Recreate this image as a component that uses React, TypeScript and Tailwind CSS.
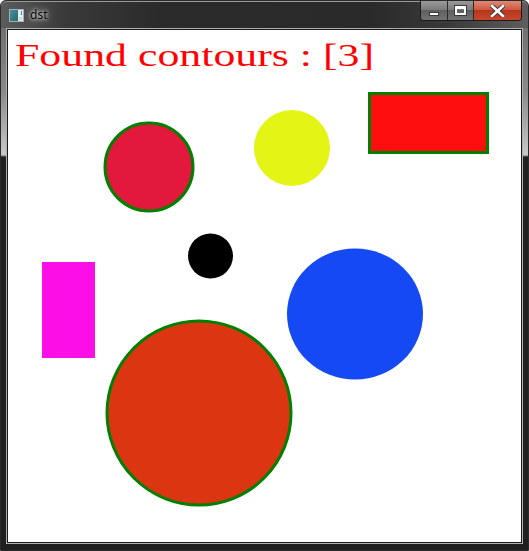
import React from "react";

function AppIcon() {
  return (
    <svg width="15" height="13" viewBox="0 0 15 13">
      <rect x="0.5" y="0.5" width="14" height="12" fill="#e8eef2" stroke="#9fb3bf" />
      <defs>
        <linearGradient id="ig" x1="0" y1="0" x2="1" y2="1">
          <stop offset="0" stopColor="#3f8fb0" />
          <stop offset="1" stopColor="#2e6a55" />
        </linearGradient>
      </defs>
      <rect x="1" y="1" width="8" height="11" fill="url(#ig)" />
      <rect x="10" y="8" width="3" height="3" fill="#cfd8dc" />
      <rect x="12" y="2" width="1" height="4" fill="#5a7f8f" />
    </svg>
  );
}

export default function App() {
  return (
    <div className="w-[529px] h-[551px] bg-white">
      <div className="w-[529px] h-[551px] flex flex-col rounded-t-[6px] border border-[#2a2a2a] bg-[linear-gradient(to_bottom,#4a4a4a_0px,#707070_28px,#8a8a8a_90px,#c8c8c8_154px,#1f1f1f_156px,#1f1f1f_100%)] overflow-hidden">
        {/* title bar */}
        <div className="relative h-[27px] flex items-center shrink-0 border-t border-[#9a9a9a] rounded-t-[6px] bg-[linear-gradient(to_right,#5c5c5c_0%,#3a3a3a_12%,#2b2b2b_30%,#2a2a2a_70%,#3a3a3a_85%,#5e5e5e_100%)]">
          <div className="ml-[8px] mt-[1px] flex items-center">
            <AppIcon />
          </div>
          <span
            className="ml-[6px] text-[12px] text-black leading-none"
            style={{ fontFamily: '"Noto Sans", "Liberation Sans", sans-serif', textShadow: "0 0 6px rgba(255,255,255,0.9), 0 0 3px rgba(255,255,255,0.9)" }}
          >
            dst
          </span>
          {/* caption buttons */}
          <div className="absolute right-[6px] top-[-1px] flex h-[20px] rounded-b-[4px] border border-t-0 border-[#1b1b1b] overflow-hidden">
            <div className="w-[27px] h-full flex items-center justify-center border-r border-[#2a2a2a] bg-[linear-gradient(to_bottom,#9a9a9a_0%,#7c7c7c_45%,#5f5f5f_50%,#727272_100%)]">
              <div className="mt-[6px] w-[10px] h-[4px] bg-white border border-[#3a3a3a]" />
            </div>
            <div className="w-[26px] h-full flex items-center justify-center border-r border-[#2a2a2a] bg-[linear-gradient(to_bottom,#9a9a9a_0%,#7c7c7c_45%,#5f5f5f_50%,#727272_100%)]">
              <div className="w-[11px] h-[9px] border-[2px] border-t-[3px] border-white outline outline-1 outline-[#3a3a3a]" />
            </div>
            <div className="w-[47px] h-full flex items-center justify-center bg-[linear-gradient(to_bottom,#e08a78_0%,#cf5a40_45%,#b8361c_50%,#c9462a_100%)]">
              <svg width="15" height="12" viewBox="0 0 15 12">
                <path d="M2 1 L13 11 M13 1 L2 11" stroke="#3a3a3a" strokeWidth="4.5" strokeLinecap="square" />
                <path d="M2 1 L13 11 M13 1 L2 11" stroke="#ffffff" strokeWidth="2.6" strokeLinecap="square" />
              </svg>
            </div>
          </div>
        </div>
        {/* body */}
        <div className="flex-1 px-[5px] pb-[6px] flex flex-col">
          <div className="border border-[#b0b0b0]">
            <div className="border border-[#1a1a1a] bg-white w-[515px] h-[514px]">
              <svg width="513" height="512" viewBox="0 0 513 512" className="block">
                <text
                  x="7"
                  y="36"
                  fill="#ff0000"
                  fontSize="32"
                  textLength="359"
                  lengthAdjust="spacingAndGlyphs"
                  style={{ fontFamily: '"Liberation Serif", serif' }}
                >
                  Found contours : [3]
                </text>
                <circle cx="141" cy="137" r="44" fill="#e2183c" stroke="#008000" strokeWidth="3" />
                <circle cx="284" cy="118" r="38" fill="#e4f414" />
                <rect x="361.5" y="63.5" width="118" height="59" fill="#ff0e0e" stroke="#008000" strokeWidth="3" />
                <circle cx="202.5" cy="226" r="22.5" fill="#000000" />
                <rect x="34" y="232" width="53" height="96" fill="#fc0fe6" />
                <ellipse cx="347" cy="284" rx="68" ry="65.5" fill="#1449f4" />
                <circle cx="191" cy="383" r="92" fill="#dc3512" stroke="#008000" strokeWidth="3" />
              </svg>
            </div>
          </div>
        </div>
      </div>
    </div>
  );
}
